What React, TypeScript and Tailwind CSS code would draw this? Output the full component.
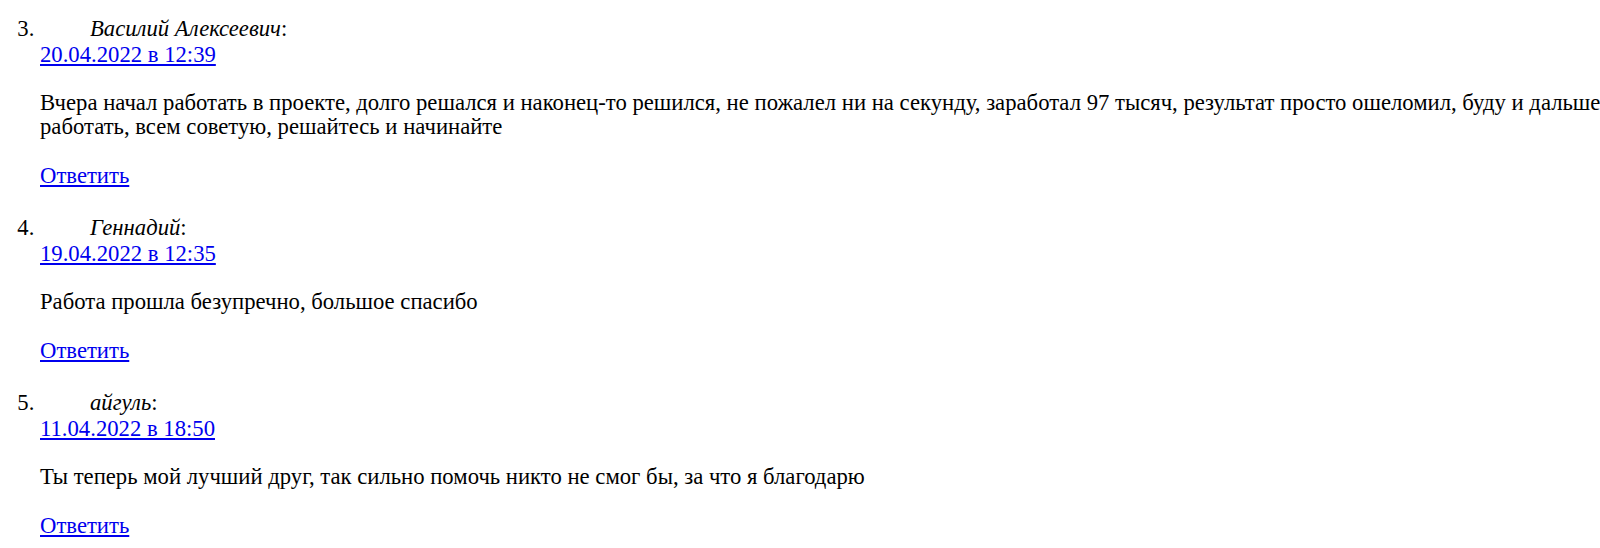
import React from "react";

type Comment = {
  author: string;
  date: string;
  text: string;
};

const comments: Comment[] = [
  {
    author: "Василий Алексеевич",
    date: "20.04.2022 в 12:39",
    text: "Вчера начал работать в проекте, долго решался и наконец-то решился, не пожалел ни на секунду, заработал 97 тысяч, результат просто ошеломил, буду и дальше работать, всем советую, решайтесь и начинайте",
  },
  {
    author: "Геннадий",
    date: "19.04.2022 в 12:35",
    text: "Работа прошла безупречно, большое спасибо",
  },
  {
    author: "айгуль",
    date: "11.04.2022 в 18:50",
    text: "Ты теперь мой лучший друг, так сильно помочь никто не смог бы, за что я благодарю",
  },
];

function CommentItem({ c }: { c: Comment }) {
  return (
    <li className="leading-[26px] mb-[26.3px]">
      <div>
        <span className="inline-block w-[50px]" />
        <cite className="italic">{c.author}</cite>
        <span>:</span>
      </div>
      <div>
        <a href="#" className="text-[#0000ee] underline">
          {c.date}
        </a>
      </div>
      <p className="mt-[22.7px] leading-[24px]">{c.text}</p>
      <p className="mt-[24px]">
        <a href="#" className="text-[#0000ee] underline">
          Ответить
        </a>
      </p>
    </li>
  );
}

export default function App() {
  return (
    <div className="w-[1600px] h-[548px] overflow-hidden bg-white text-black text-[22.7px] leading-[26px] font-['Liberation_Serif','Times_New_Roman',serif]">
      <ol start={3} className="list-decimal pl-10 pt-[16px] w-[1680px]">
        {comments.map((c) => (
          <CommentItem key={c.date} c={c} />
        ))}
      </ol>
    </div>
  );
}
